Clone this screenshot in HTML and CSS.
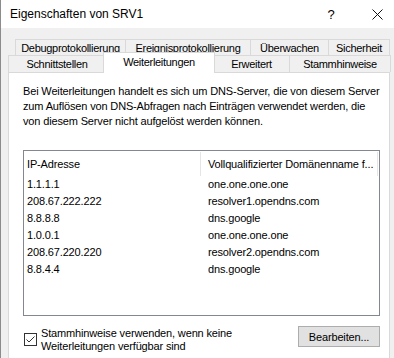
FILE: index.html
```html
<!DOCTYPE html>
<html lang="de">
<head>
    <meta name="viewport" content="width=device-width, initial-scale=1">
    <link rel="stylesheet" href="styles.css">
</head>
<body>
    <div class="window">
        <div class="titlebar">
            <span class="title">Eigenschaften von SRV1</span>
            <span class="help">?</span>
            <span class="close">
                <svg width="11" height="11" viewBox="0 0 11 11">
                    <path d="M0.5 0.5 L10.5 10.5 M10.5 0.5 L0.5 10.5" stroke="#111" stroke-width="1" fill="none"/>
                </svg>
            </span>
        </div>

        <div class="client">
            <!-- tab rows -->
            <div class="tabrow back">
                <div class="tab t-debug">Debugprotokollierung</div>
                <div class="tab t-ereig">Ereignisprotokollierung</div>
                <div class="tab t-ueber">Überwachen</div>
                <div class="tab t-sich">Sicherheit</div>
            </div>
            <div class="tabrow front">
                <div class="tab t-schn">Schnittstellen</div>
                <div class="tab t-weit selected">Weiterleitungen</div>
                <div class="tab t-erw">Erweitert</div>
                <div class="tab t-stamm">Stammhinweise</div>
            </div>

            <div class="panel">
                <p class="desc">Bei Weiterleitungen handelt es sich um DNS-Server, die von diesem Server<br>
                zum Auflösen von DNS-Abfragen nach Einträgen verwendet werden, die<br>
                von diesem Server nicht aufgelöst werden können.</p>

                <div class="listview">
                    <div class="lv-head">
                        <div class="col ip">IP-Adresse</div>
                        <div class="col fqdn">Vollqualifizierter Domänenname f...</div>
                    </div>
                    <div class="lv-row"><div class="col ip">1.1.1.1</div><div class="col fqdn">one.one.one.one</div></div>
                    <div class="lv-row"><div class="col ip">208.67.222.222</div><div class="col fqdn">resolver1.opendns.com</div></div>
                    <div class="lv-row"><div class="col ip">8.8.8.8</div><div class="col fqdn">dns.google</div></div>
                    <div class="lv-row"><div class="col ip">1.0.0.1</div><div class="col fqdn">one.one.one.one</div></div>
                    <div class="lv-row"><div class="col ip">208.67.220.220</div><div class="col fqdn">resolver2.opendns.com</div></div>
                    <div class="lv-row"><div class="col ip">8.8.4.4</div><div class="col fqdn">dns.google</div></div>
                </div>

                <div class="footer">
                    <label class="check">
                        <svg class="box" width="13" height="13" viewBox="0 0 13 13">
                            <rect x="0.5" y="0.5" width="12" height="12" fill="#fff" stroke="#333"/>
                            <path d="M2.5 6.5 L5 9 L10.5 3.5" fill="none" stroke="#333" stroke-width="1"/>
                        </svg>
                        <span>Stammhinweise verwenden, wenn keine<br>Weiterleitungen verfügbar sind</span>
                    </label>
                    <button type="button" class="btn">Bearbeiten...</button>
                </div>
            </div>
        </div>
    </div>
</body>
</html>
```

FILE: styles.css
```css
body {
    margin: 0;
    font-family: "Liberation Sans", Arial, sans-serif;
    font-size: 11px;
    letter-spacing: -0.15px;
    color: #000;
}

.window {
    width: 394px;
    height: 358px;
    overflow: hidden;
    background-color: #f0f0f0;
    border-left: 1px solid #8c8c8c;
    box-sizing: border-box;
}

.titlebar {
    height: 28px;
    background-color: #fff;
    display: flex;
    align-items: center;
    padding-left: 9px;
}

    .titlebar .title {
        flex: 1;
        font-size: 12px;
        letter-spacing: 0;
    }

    .titlebar .help {
        width: 46px;
        font-size: 13px;
        text-align: center;
        margin-right: 6px;
    }

    .titlebar .close {
        width: 34px;
        height: 11px;
        display: flex;
        justify-content: center;
    }

.client {
    padding: 11px 0 0 7px;
}

.tabrow {
    display: flex;
    height: 17px;
}

    .tabrow.back {
        margin-left: 7px;
        height: 16px;
    }

.tab {
    box-sizing: border-box;
    border: 1px solid #d9d9d9;
    border-bottom: none;
    border-right: none;
    background-color: #f0f0f0;
    text-align: center;
    line-height: 16px;
    letter-spacing: -0.3px;
    white-space: nowrap;
}

.t-debug { width: 110px; }
.t-ereig { width: 125px; }
.t-ueber { width: 78px; }
.t-sich  { width: 62px; border-right: 1px solid #d9d9d9; }

.t-schn  { width: 97px; }
.t-weit  { width: 108px; }
.t-erw   { width: 76px; }
.t-stamm { width: 102px; border-right: 1px solid #d9d9d9; }

.tab.selected {
    background-color: #fff;
    height: 21px;
    margin-top: -3px;
    margin-left: -2px;
    margin-right: -2px;
    width: 112px;
    border-right: 1px solid #d9d9d9;
    position: relative;
    z-index: 1;
    line-height: 18px;
}

.panel {
    width: 382px;
    height: 300px;
    box-sizing: border-box;
    background-color: #fff;
    border: 1px solid #d9d9d9;
    padding: 11px 0 0 14px;
}

.desc {
    margin: 0;
    line-height: 15px;
    white-space: nowrap;
}

.listview {
    margin-top: 21px;
    width: 357px;
    height: 166px;
    box-sizing: border-box;
    border: 1px solid #828790;
}

.lv-head {
    display: flex;
    height: 25px;
    align-items: center;
}

    .lv-head .ip {
        border-right: 1px solid #e5e5e5;
        height: 24px;
        line-height: 25px;
    }

    .lv-head .fqdn {
        border-right: 1px solid #e5e5e5;
        height: 24px;
        line-height: 25px;
        width: 177px;
    }

.lv-row {
    display: flex;
    height: 17px;
    line-height: 17px;
}

.col {
    box-sizing: border-box;
    padding-left: 3px;
    white-space: nowrap;
}

    .col.ip { width: 177px; }
    .col.fqdn { padding-left: 7px; }

.footer {
    display: flex;
    align-items: flex-start;
    justify-content: space-between;
    margin-top: 8px;
    padding-right: 9px;
}

.check {
    display: flex;
    align-items: flex-start;
    margin-top: 3px;
    line-height: 13px;
}

    .check .box {
        margin: 6px 4px 0 1px;
        flex: none;
    }

.btn {
    width: 82px;
    height: 21px;
    margin-top: 2px;
    font-family: inherit;
    font-size: 11px;
    letter-spacing: -0.15px;
    background-color: #e1e1e1;
    border: 1px solid #adadad;
    padding: 0;
    color: #000;
}
```
